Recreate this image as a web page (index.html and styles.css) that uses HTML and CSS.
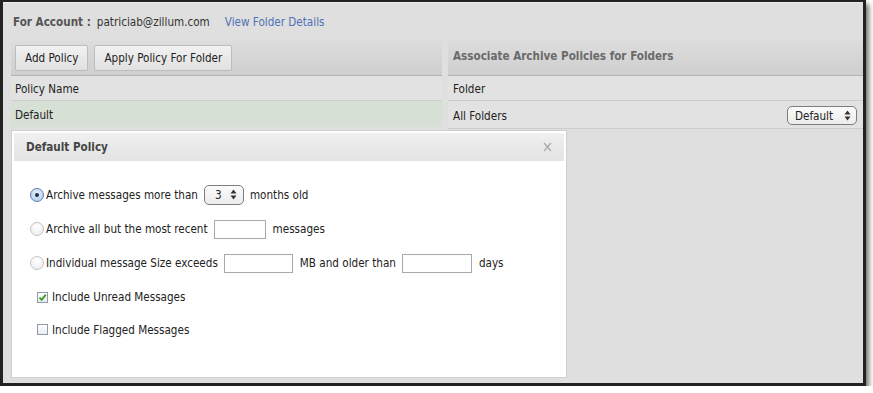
FILE: index.html
```html
<!DOCTYPE html>
<html lang="en">

<head>
    <meta charset="UTF-8">
    <title>Archive Policies</title>
    <link rel="stylesheet" href="styles.css">
</head>

<body>
    <div class="window">
        <div class="account">
            <span class="label">For Account :</span>
            <span class="email">patriciab@zillum.com</span>
            <a class="link" href="#">View Folder Details</a>
        </div>

        <div class="panels">
            <div class="panel left">
                <div class="toolbar">
                    <button class="btn">Add Policy</button>
                    <button class="btn">Apply Policy For Folder</button>
                </div>
                <div class="row head">Policy Name</div>
                <div class="row selected">Default</div>
            </div>

            <div class="panel right">
                <div class="toolbar title">Associate Archive Policies for Folders</div>
                <div class="row head">Folder</div>
                <div class="row split">
                    <span>All Folders</span>
                    <span class="select wide">Default
                        <svg class="arrows" width="7" height="11" viewBox="0 0 7 11"><path d="M3.5 0.5 L6.5 4.5 L0.5 4.5 Z M3.5 10.5 L6.5 6.5 L0.5 6.5 Z" fill="#333"/></svg>
                    </span>
                </div>
            </div>
        </div>

        <div class="dialog">
            <div class="dialog-head">
                <span>Default Policy</span>
                <span class="close">&times;</span>
            </div>
            <div class="dialog-body">
                <div class="opt first">
                    <span class="radio on"></span>
                    <span>Archive messages more than</span>
                    <span class="select small">3
                        <svg class="arrows" width="7" height="11" viewBox="0 0 7 11"><path d="M3.5 0.5 L6.5 4.5 L0.5 4.5 Z M3.5 10.5 L6.5 6.5 L0.5 6.5 Z" fill="#333"/></svg>
                    </span>
                    <span>months old</span>
                </div>
                <div class="opt">
                    <span class="radio"></span>
                    <span>Archive all but the most recent</span>
                    <span class="field f-count"></span>
                    <span>messages</span>
                </div>
                <div class="opt">
                    <span class="radio"></span>
                    <span>Individual message Size exceeds</span>
                    <span class="field f-size"></span>
                    <span>MB and older than</span>
                    <span class="field f-days"></span>
                    <span>days</span>
                </div>
                <div class="opt check-row">
                    <span class="check on">
                        <svg width="9" height="9" viewBox="0 0 9 9"><path d="M1.5 4.5 L3.6 6.8 L7.8 1.6" fill="none" stroke="#3a9a2a" stroke-width="1.8"/></svg>
                    </span>
                    <span>Include Unread Messages</span>
                </div>
                <div class="opt check-row last">
                    <span class="check"></span>
                    <span>Include Flagged Messages</span>
                </div>
            </div>
        </div>
    </div>
</body>

</html>
```

FILE: styles.css
```css
* {
    margin: 0;
    padding: 0;
    box-sizing: border-box;
}

body {
    background: #ffffff;
    font-family: 'DejaVu Sans', 'Liberation Sans', sans-serif;
    font-stretch: condensed;
    font-size: 11.6px;
    color: #222;
}

.window {
    position: relative;
    width: 866px;
    height: 386px;
    border: 3px solid #222;
    border-top-width: 2px;
    background: #dfdfdf;
    box-shadow: 3px 4px 5px rgba(0, 0, 0, 0.55);
}

.account {
    height: 39px;
    display: flex;
    align-items: center;
    padding-left: 10px;
    border-top: 1px solid #ececec;
}

.label {
    font-weight: bold;
    color: #555;
    margin-right: 6px;
}

.email {
    color: #333;
}

.link {
    color: #4f72b8;
    text-decoration: none;
    margin-left: 15px;
}

.panels {
    display: flex;
    padding-left: 8px;
    gap: 6px;
}

.panel.left {
    width: 431px;
}

.panel.right {
    flex: 1;
}

.toolbar {
    height: 35px;
    display: flex;
    align-items: center;
    gap: 6px;
    padding: 0 4px;
    background: linear-gradient(#dcdcdc, #cfcfcf);
    border-bottom: 1px solid #b4b4b4;
}

.toolbar.title {
    padding: 0 0 4px 5px;
    font-weight: bold;
    color: #6a6a6a;
}

.btn {
    height: 26px;
    padding: 0 9px;
    font-family: inherit;
    font-stretch: condensed;
    font-size: 11.6px;
    color: #222;
    background: linear-gradient(#f1f1f1, #e1e1e1);
    border: 1px solid #bdbdbd;
    border-radius: 2px;
}

.row {
    display: flex;
    align-items: center;
    padding: 2px 4px 0;
    background: #e2e2e2;
    border-bottom: 1px solid #cdcdcd;
}

.row.head {
    height: 25px;
}

.row.selected {
    height: 26px;
    background: #d7e0d4;
    border-bottom: none;
}

.panel.right .row {
    padding-left: 5px;
}

.row.split {
    height: 28px;
    justify-content: space-between;
    padding-right: 6px;
}

.select {
    display: inline-flex;
    align-items: center;
    justify-content: space-between;
    border: 1px solid #7d7d7d;
    border-radius: 5px;
    background: linear-gradient(#fbfbfb, #ececec);
    color: #222;
}

.select.wide {
    width: 70px;
    height: 19px;
    padding: 0 5px 0 7px;
}

.select.small {
    width: 40px;
    height: 20px;
    padding: 0 6px 0 10px;
    margin: 0 6px;
}

.dialog {
    position: absolute;
    left: 8px;
    top: 128px;
    width: 556px;
    height: 248px;
    padding: 2px;
    background: #ffffff;
    border: 1px solid #cfcfcf;
}

.dialog-head {
    height: 28px;
    display: flex;
    align-items: center;
    justify-content: space-between;
    padding: 0 11px 0 12px;
    background: linear-gradient(#f0f0f0, #e3e3e3);
    font-weight: bold;
    color: #444;
}

.close {
    color: #a8a8a8;
    font-size: 15px;
    font-weight: normal;
}

.dialog-body {
    padding: 16px 0 0 16px;
    color: #222;
}

.opt {
    height: 34px;
    display: flex;
    align-items: center;
}

.opt.first {
    height: 35px;
}

.opt.last {
    height: 31px;
}

.radio {
    width: 14px;
    height: 14px;
    margin-right: 2px;
    border-radius: 50%;
    border: 1px solid #c4c4c4;
    background: radial-gradient(circle at 50% 30%, #ffffff, #ebebeb);
    display: flex;
    align-items: center;
    justify-content: center;
}

.radio.on {
    border-color: #5a7fb7;
    background: radial-gradient(circle at 50% 35%, #e8f1fb, #a9c6ea);
}

.radio.on::after {
    content: "";
    width: 4px;
    height: 4px;
    border-radius: 50%;
    background: #1c2f4f;
}

.field {
    height: 19px;
    border: 1px solid #a9a9a9;
    background: #fff;
    margin: 0 7px 0 6px;
}

.f-count {
    width: 52px;
}

.f-size {
    width: 69px;
}

.f-days {
    width: 70px;
}

.check-row {
    padding-left: 7px;
}

.check {
    width: 11px;
    height: 11px;
    margin-right: 4px;
    border: 1px solid #8d9aa8;
    background: linear-gradient(#ffffff, #e9edf1);
    display: flex;
    align-items: center;
    justify-content: center;
}
```
